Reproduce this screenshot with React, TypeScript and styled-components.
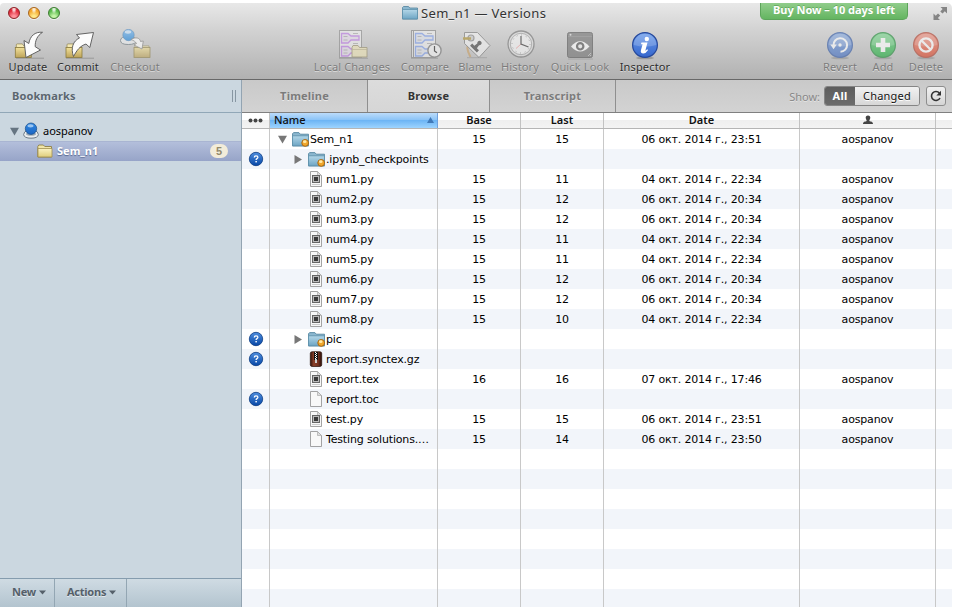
import React from 'react';
import styled, { createGlobalStyle, css } from 'styled-components';

const GlobalStyle = createGlobalStyle`
  * { box-sizing: border-box; }
  body { margin: 0; background: #fff; overflow: hidden; }
`;

const Window = styled.div`
  width: 954px;
  height: 608px;
  padding: 3px 2px 1px 0;
  display: flex;
  flex-direction: column;
  color: #111;
  background: #fff;
  font-family: 'Noto Sans', 'Open Sans', sans-serif;
  font-size: 11px;
  white-space: nowrap;
  cursor: default;
`;

const TitleArea = styled.header`
  flex: none;
  height: 77px;
  border-bottom: 1px solid #686868;
  border-radius: 4px 5px 0 0;
  background: linear-gradient(#e8e8e8, #d2d2d2 36%, #b1b1b1);
`;

const TitleBar = styled.div`
  height: 25px;
  display: grid;
  grid-template-columns: 402px 1fr 148px 44px;
  align-items: start;
`;

const Lights = styled.div`
  display: flex;
  gap: 8px;
  padding: 4px 0 0 8px;
`;

const Light = styled.i<{ $edge: string; $core: string; $glow: string }>`
  width: 12px;
  height: 12px;
  border-radius: 50%;
  border: 1px solid ${p => p.$edge};
  background:
    radial-gradient(ellipse at 50% 8%, #fffc 0 14%, #fff0 38%),
    radial-gradient(circle at 50% 90%, ${p => p.$glow} 0 15%, ${p => p.$core} 65%);
  box-shadow: 0 1px 0 #ffffff90;
`;

const Title = styled.div`
  display: flex;
  align-items: center;
  height: 20px;
  gap: 3px;
  font-size: 13px;
  letter-spacing: 0.33px;
  color: #333;
  text-shadow: 0 1px 0 #ffffffa0;
`;

const BuyNow = styled.div`
  height: 17px;
  border: 1px solid #5ca45a;
  border-top: 0;
  border-radius: 0 0 5px 5px;
  background: linear-gradient(#91cd8b, #64b561);
  color: #fff;
  font-size: 11px;
  font-weight: 700;
  line-height: 14px;
  text-align: center;
  letter-spacing: -0.02px;
  text-shadow: 0 -1px 0 #4b944988;
`;

const Corner = styled.div`
  padding: 3px 0 0 25px;
  height: 22px;
`;

const Tools = styled.div`
  display: flex;
  height: 51px;
`;

const ToolGroup = styled.div<{ $before?: number }>`
  display: flex;
  margin-left: ${p => p.$before ?? 0}px;
`;

const Tool = styled.div<{ $w: number; $off?: boolean }>`
  width: ${p => p.$w}px;
  display: flex;
  flex-direction: column;
  align-items: center;
  color: ${p => (p.$off ? '#7c7c7c' : '#2d2d2d')};
  letter-spacing: 0.15px;
  text-shadow: 0 1px 0 #ffffff80;
  svg { flex: none; width: 36px; height: 32px; opacity: ${p => (p.$off ? 0.62 : 1)}; }
  span { line-height: 14px; }
`;

const Body = styled.div`
  flex: 1;
  min-height: 0;
  display: flex;
`;

const Sidebar = styled.aside`
  flex: none;
  width: 242px;
  border-right: 1px solid #93a4b2;
  background: #cbd7e0;
  display: flex;
  flex-direction: column;
`;

const SidebarHeader = styled.div`
  height: 33px;
  border-bottom: 1px solid #91a7b7;
  display: flex;
  align-items: center;
  justify-content: space-between;
  padding: 0 5px 1px 12px;
  color: #5b6670;
  font-weight: 700;
  letter-spacing: 0.12px;
  text-shadow: 0 1px 0 #ffffff80;
`;

const Grip = styled.i`
  width: 4px;
  height: 12px;
  border: solid #8796a2;
  border-width: 0 1px;
`;

const Tree = styled.div`
  flex: 1;
  padding-top: 8px;
`;

const TreeRow = styled.div<{ $selected?: boolean }>`
  height: 20px;
  display: flex;
  align-items: center;
  padding: 0 13px 0 ${p => (p.$selected ? 37 : 10)}px;
  gap: 4px;
  color: ${p => (p.$selected ? '#fff' : '#000')};
  font-weight: ${p => (p.$selected ? 700 : 400)};
  span { line-height: 14px; margin-top: -1px; }
  ${p => p.$selected && css`
    background: linear-gradient(#b5c0dc, #97a4c8);
    text-shadow: 0 1px 1px #5b6a92;
    box-shadow: inset 0 1px 0 #a9b5d2;
  `}
`;

const Count = styled.b`
  margin-left: auto;
  width: 18px;
  height: 14px;
  border-radius: 7px;
  background: #f2ecd9;
  color: #92896c;
  text-align: center;
  line-height: 14px;
  text-shadow: none;
  font-family: 'Liberation Sans', sans-serif;
`;

const SidebarFooter = styled.div`
  height: 29px;
  border-top: 1px solid #859cae;
  background: linear-gradient(#cfdbe3, #b3c4cf);
  display: flex;
`;

const FooterButton = styled.div<{ $w: number }>`
  width: ${p => p.$w}px;
  border-right: 1px solid #93a6b3;
  padding: 0 0 3px 12px;
  display: flex;
  align-items: center;
  gap: 3px;
  font-weight: 700;
  color: #55606a;
  letter-spacing: -0.25px;
  text-shadow: 0 1px 0 #ffffff90;
  svg { margin-top: 2px; }
`;

const Main = styled.main`
  flex: 1;
  min-width: 0;
  display: flex;
  flex-direction: column;
`;

const TabBar = styled.nav`
  flex: none;
  height: 33px;
  display: flex;
  border-bottom: 1px solid #808080;
  background: linear-gradient(#c9c9c9, #d3d3d3);
`;

const Tab = styled.div<{ $w: number; $active?: boolean }>`
  width: ${p => p.$w}px;
  border-right: 1px solid #8f8f8f;
  padding-bottom: 1px;
  display: flex;
  align-items: center;
  justify-content: center;
  font-weight: 700;
  letter-spacing: 0.2px;
  color: ${p => (p.$active ? '#333' : '#7b7b7b')};
  background: ${p => (p.$active ? 'linear-gradient(#dcdcdc, #d6d6d6)' : 'none')};
  text-shadow: 0 1px 0 #ffffff90;
`;

const Filter = styled.div`
  margin-left: auto;
  padding-right: 6px;
  display: flex;
  align-items: center;
  color: #888;
  text-shadow: 0 1px 0 #ffffff70;
`;

const Segments = styled.div`
  height: 20px;
  margin: 0 6px 0 4px;
  display: flex;
  border: 1px solid #858585;
  border-radius: 3px;
  overflow: hidden;
`;

const Segment = styled.span<{ $w: number; $on?: boolean }>`
  width: ${p => p.$w}px;
  line-height: 17px;
  text-align: center;
  letter-spacing: 0.2px;
  font-weight: ${p => (p.$on ? 700 : 400)};
  color: ${p => (p.$on ? '#fff' : '#111')};
  background: ${p => (p.$on ? 'linear-gradient(#5d5d5d, #6b6b6b)' : 'linear-gradient(#f1f1f1, #d7d7d7)')};
  text-shadow: ${p => (p.$on ? 'none' : '0 1px 0 #fff')};
`;

const Refresh = styled.div`
  width: 20px;
  height: 20px;
  border: 1px solid #8d8d8d;
  border-radius: 3px;
  background: linear-gradient(#f1f1f1, #d5d5d5);
`;

const columns = '28px 168px 83px 83px 196px 136px 17px';

const TableHead = styled.div`
  flex: none;
  height: 16px;
  display: grid;
  grid-template-columns: ${columns};
  border-bottom: 1px solid #b5b5b5;
  background: linear-gradient(#fff 0 45%, #efefef 50%, #f3f3f3);
`;

const HeadCell = styled.div<{ $sorted?: boolean }>`
  display: flex;
  align-items: center;
  justify-content: ${p => (p.$sorted ? 'space-between' : 'center')};
  font-weight: ${p => (p.$sorted ? 500 : 600)};
  line-height: 12px;
  padding: ${p => (p.$sorted ? '0 3px 1px 4px' : '0 0 1px')};
  border-right: 1px solid ${p => (p.$sorted ? '#6fa0dd' : '#c2c2c2')};
  background: ${p => (p.$sorted ? 'linear-gradient(#bcdcfa, #8cc4f7 45%, #6db5f5 50%, #9dd4ff)' : 'none')};
  &:last-child { border: 0; }
`;

const Rows = styled.div`
  flex: 1;
  min-height: 0;
  overflow: hidden;
`;

const Row = styled.div<{ $alt: boolean }>`
  height: 20px;
  display: grid;
  grid-template-columns: ${columns};
  background: ${p => (p.$alt ? '#f2f5fa' : '#fff')};
  font-family: 'DejaVu Sans', sans-serif;
  letter-spacing: -0.16px;
  color: #000;
`;

const Cell = styled.div`
  display: flex;
  align-items: center;
  justify-content: center;
  border-right: 1px solid #c8c8c8;
  &:last-child { border: 0; }
`;

const StatusCell = styled(Cell)`
  padding-left: 1px;
`;

const NameCell = styled(Cell)<{ $depth: number }>`
  justify-content: flex-start;
  padding-left: ${p => 8 + p.$depth * 16}px;
`;

const Twist = styled.i`
  width: 14px;
  height: 20px;
  display: flex;
  align-items: center;
`;

const FileSlot = styled.i`
  width: 18px;
  height: 18px;
  display: flex;
  align-items: center;
`;

const Grad = ({ id, a, b }: { id: string; a: string; b: string }) => (
  <linearGradient id={id} x1="0" y1="0" x2="0" y2="1">
    <stop offset="0" stopColor={a} />
    <stop offset="1" stopColor={b} />
  </linearGradient>
);

const Box = ({ x, y }: { x: number; y: number }) => (
  <g>
    <path d={`M${x + 1} ${y}v-2.5q0-1 1-1h5l1.5 2h6.5v2.500z`} fill="#f4e9b4" stroke="#8e8352" strokeWidth=".7" />
    <rect x={x} y={y} width="16" height="10" fill="url(#gold)" stroke="#8a7a3c" strokeWidth=".8" />
  </g>
);

const UpdateIcon = () => (
  <svg viewBox="10 28 36 32">
    <defs><Grad id="gold" a="#f2e19a" b="#bea45a" /></defs>
    <path d="M16 58.2h28" stroke="#0003" />
    <Box x={15.3} y={47.4} />
    <path d="M42.500 32.300C35 31.500 30 36 28.800 43.500L24 40.500l2 17L40.500 50l-5.300-3.300c-.2-6 2-11 7.300-14.400z" fill="#fcfcfc" stroke="#555" strokeWidth=".9" strokeLinejoin="round" />
  </svg>
);

const CommitIcon = () => (
  <svg viewBox="60 28 36 32">
    <path d="M66 58.2h28" stroke="#0003" />
    <Box x={66} y={47.4} />
    <path d="M73.500 56.500C70.500 48 73 41 79.500 38l-3-3.500 17-2-3.700 15-3.800-3.500c-6 2-9 6-12.500 12.500z" fill="#fcfcfc" stroke="#555" strokeWidth=".9" strokeLinejoin="round" />
  </svg>
);

const CheckoutIcon = () => (
  <svg viewBox="117 28 36 32">
    <defs><Grad id="ball" a="#6fb4f2" b="#1f86dc" /></defs>
    <path d="M120.500 40.500q0-4 7.800-4t7.800 4q0 4-7.800 4t-7.800-4z" fill="#eceff1" stroke="#6c7981" />
    <circle cx="128.500" cy="35" r="5.700" fill="url(#ball)" stroke="#2f74b4" strokeWidth=".6" />
    <ellipse cx="128" cy="32" rx="3.200" ry="1.700" fill="#e5f3ff" opacity=".8" />
    <Box x={134} y={47.4} />
    <path d="M131 39.500c5-3 9-1.500 9.500 2l2.800-.5-1.300 8-8-4 2.500-1.500c-1-2-3-3-5.500-4z" fill="#fff" stroke="#777" strokeWidth=".8" />
  </svg>
);

const Blocks = ({ color }: { color: string }) => (
  <g fill="none" stroke={color} strokeWidth="1.3">
    <path d="M341.500 33.500h6.500l3 2.500h8v4h-8l-3 3h-6.500z" fill={color + '22'} />
    <path d="M341.500 46.500h6.500l3 2.500h8v4h-8l-3 3h-6.500z" fill={color + '22'} />
    <path d="M343.500 36.500h4M343.500 40h4M343.500 50h4M343.500 53h4M353 33.500h5M353 43.500h5" stroke="#999" strokeWidth=".8" />
  </g>
);

const LocalIcon = () => (
  <svg viewBox="334 28 36 32">
    <path d="M339 58.2h29" stroke="#0004" />
    <rect x="339.500" y="30.500" width="22" height="27" fill="#ededed" stroke="#8c8c8c" />
    <Blocks color="#bd7be6" />
    <path d="M352 57v-9.500l1-2h5l1.500 2h7.500V57z" fill="#eee5b7" stroke="#938a64" strokeWidth=".9" />
    <path d="M352 49.500h15" stroke="#b1a87c" strokeWidth=".7" />
  </svg>
);

const CompareIcon = () => (
  <svg viewBox="407 28 36 32">
    <path d="M411 58.2h27" stroke="#0004" />
    <rect x="411.500" y="30.500" width="3" height="27" fill="#e2e2e2" stroke="#858585" />
    <rect x="413.500" y="30.500" width="22" height="27" fill="#ededed" stroke="#858585" />
    <g transform="translate(74 0)"><Blocks color="#7d9dec" /></g>
    <circle cx="434.500" cy="50.500" r="6.600" fill="#f4f4f4" stroke="#777" strokeWidth="1.4" />
    <path d="M434.500 46v5l2.500 1.700" fill="none" stroke="#222" strokeWidth="1.2" />
  </svg>
);

const BlameIcon = () => (
  <svg viewBox="457 28 36 32">
    <path d="M467 57.7h20" stroke="#0003" />
    <path d="M470 40c-4 5-3 11 .5 17" fill="none" stroke="#c99f65" strokeWidth="2" />
    <path d="M464.500 32.500h13l12.500 13-11 12-14.500-14z" fill="#f2f2f2" stroke="#7c7c7c" strokeLinejoin="round" />
    <circle cx="471" cy="38" r="3" fill="#ccc" stroke="#888" strokeWidth="1.2" />
    <path d="M463 38.500h8" stroke="#ad9130" strokeWidth="2.5" />
    <g transform="translate(477 45.500) rotate(45)" fill="#444"><circle cy="-3.500" r="2.2" /><path d="M-1.200-2h2.400l.6 4h3v3h-9.600V2h3z" /></g>
  </svg>
);

const HistoryIcon = () => (
  <svg viewBox="502 28 36 32">
    <circle cx="521" cy="44" r="13" fill="#e2e2e2" stroke="#777" strokeWidth="1.3" />
    <circle cx="521" cy="44" r="10.7" fill="#f6f6f6" stroke="#969696" strokeWidth=".9" />
    <circle cx="521" cy="44" r="9" fill="none" stroke="#777" strokeDasharray=".8 3.912" />
    <path d="m521 44-5 4.500" stroke="#f28c8c" strokeWidth=".8" />
    <path d="M521 36v8l7.500 3" fill="none" stroke="#333" strokeWidth="1.2" />
  </svg>
);

const LookIcon = () => (
  <svg viewBox="562 28 36 32">
    <path d="M568 59h25" stroke="#0003" />
    <rect x="567.500" y="32.500" width="25" height="25" rx="2" fill="#757575" stroke="#555" />
    <path d="M568 36.500h24" stroke="#8f8f8f" strokeWidth=".7" />
    <circle cx="570.500" cy="34.700" r="1" fill="#ddd" />
    <path d="M571 46.500q9-10.500 18.500 0-9.500 10-18.500 0z" fill="#fff" />
    <circle cx="580.200" cy="46.300" r="3.2" fill="#f3f3f3" stroke="#555" strokeWidth="2.2" />
    <path d="m588 56 3-3m-1 3 1-1" stroke="#ddd" strokeWidth=".7" />
  </svg>
);

type RoundProps = { x: number; id: string; a: string; b: string; edge: string; children: React.ReactNode };
const RoundIcon = ({ x, id, a, b, edge, children }: RoundProps) => (
  <svg viewBox={`${x - 18} 28 36 32`}>
    <defs><Grad id={id} a={a} b={b} /></defs>
    <ellipse cx={x} cy="58" rx="9" ry="1.3" fill="#0003" />
    <circle cx={x} cy="45" r="12.4" fill={`url(#${id})`} stroke={edge} strokeWidth="1.2" />
    <path d={`M${x - 11.3} 45a11.3 11.3 0 0 1 22.6 0q-11 3-22.6 0z`} fill="#fff" opacity=".2" />
    <g transform={`translate(${x} 45)`}>{children}</g>
  </svg>
);

const InfoIcon = () => (
  <RoundIcon x={645} id="info" a="#6a9bea" b="#3566cd" edge="#26489a">
    <circle cx="1.8" cy="-6" r="2.2" fill="#fff" />
    <path d="M-3.500-2.500H2.500L.3 5.700q.8 0 1.800-1.400l1 .6Q.8 8.500-1.700 8.500c-2.200 0-2.900-1.500-2.300-3.500l1.600-5.800h-1.700z" fill="#fff" />
  </RoundIcon>
);

const RevertIcon = () => (
  <RoundIcon x={840} id="revert" a="#709adc" b="#4470c4" edge="#3259a5">
    <path d="M-6.500.5A6.800 6.800 0 1 1 .5 6.800" fill="none" stroke="#fff" strokeWidth="2" />
    <path d="M-9.700-.5h6.500l-3.300 4.800z" fill="#fff" />
    <circle r="1.7" fill="#fff" />
  </RoundIcon>
);

const AddIcon = () => (
  <RoundIcon x={883} id="add" a="#61d178" b="#22ae3f" edge="#218b39">
    <path d="M-2.300-7h4.600v4.700H7v4.600H2.300V7h-4.600V2.300H-7v-4.600h4.700z" fill="#fff" />
  </RoundIcon>
);

const DeleteIcon = () => (
  <RoundIcon x={926} id="delete" a="#ee7a66" b="#df4729" edge="#b1402e">
    <circle r="6.6" fill="none" stroke="#fff" strokeWidth="2.3" />
    <path d="m-4.500-4.500 9 9" stroke="#fff" strokeWidth="2.3" />
  </RoundIcon>
);

const FolderIcon = ({ badge, w = 16 }: { badge?: boolean; w?: number }) => (
  <svg width={w} height={w} viewBox="0 0 16 16">
    <defs><Grad id="folder" a="#b4d7e8" b="#6da5c4" /></defs>
    <path d="M.5 14V2.500l1-1h5l1.300 1.500h7.700V14z" fill="#8bb7cf" stroke="#50839d" strokeWidth=".8" />
    <path d="M.5 4.500h15V14H.5z" fill="url(#folder)" stroke="#5e91ab" strokeWidth=".8" />
    {badge && <><circle cx="12.4" cy="11.200" r="3.2" fill="#f0a72c" stroke="#a66613" strokeWidth=".9" /><ellipse cx="12" cy="10" rx="1.7" ry="1.2" fill="#ffe9a6" /></>}
  </svg>
);

const YellowFolder = () => (
  <svg width="16" height="16" viewBox="0 0 16 16">
    <defs><Grad id="yellow" a="#fbf3c4" b="#dfcd7b" /></defs>
    <path d="M.8 14V3.500l1-1.500h4.500l1.500 1.500h6.700V14z" fill="#f1e5a8" stroke="#8d7f46" strokeWidth=".9" />
    <path d="M1 14V5.500h14V14z" fill="url(#yellow)" stroke="#a29150" strokeWidth=".8" />
  </svg>
);

const ServerIcon = () => (
  <svg width="16" height="18" viewBox="0 0 16 18">
    <defs><Grad id="server" a="#2f86e0" b="#1b66c4" /></defs>
    <path d="M.6 12.700Q1 9.500 4 8.500h8q3 1 3.400 4.200-.6 3.500-7.400 3.500T.6 12.700z" fill="#e9ecee" stroke="#6d7b88" />
    <ellipse cx="8" cy="12" rx="5" ry="1.800" fill="#9aa9b5" />
    <circle cx="8" cy="6.700" r="5.700" fill="url(#server)" stroke="#164c8a" strokeWidth=".7" />
    <ellipse cx="7.500" cy="3.800" rx="3" ry="1.600" fill="#d5ebff" opacity=".65" />
  </svg>
);

const PageIcon = ({ script }: { script?: boolean }) => (
  <svg width="16" height="16" viewBox="0 0 16 16">
    <path d="M2.500.5h7l4 4v11h-11z" fill="#f8f8f8" stroke="#999" strokeWidth=".9" />
    <path d="M9.500.5v4h4z" fill="#ddd" stroke="#aaa" strokeWidth=".7" />
    {script && <><rect x="4.500" y="4.500" width="7" height="7" fill="#bbb" stroke="#666" /><rect x="6" y="6" width="4" height="4" fill="#383838" /><path d="M4 13.500h8" stroke="#ccc" /></>}
  </svg>
);

const ZipIcon = () => (
  <svg width="16" height="16" viewBox="0 0 16 16">
    <defs><linearGradient id="zip"><stop stopColor="#33130a" /><stop offset=".3" stopColor="#8b402a" /><stop offset=".7" stopColor="#733120" /><stop offset="1" stopColor="#250d07" /></linearGradient></defs>
    <rect x="2.3" y=".7" width="11.4" height="14.8" rx="1.8" fill="url(#zip)" stroke="#2a0e07" strokeWidth=".7" />
    <path d="M8 1v8" stroke="#111" strokeWidth="4" />
    <path d="M7.500 1v8" stroke="#fff" strokeDasharray="1 1" />
    <path d="M8.500 2v7" stroke="#fff" strokeDasharray="1 1" />
    <rect x="7" y="8" width="2" height="4" fill="#ccc" />
  </svg>
);

const Question = () => (
  <svg width="16" height="16" viewBox="0 0 15 16">
    <defs><Grad id="question" a="#4e8ede" b="#0646a6" /></defs>
    <circle cx="7.5" cy="8" r="6.7" fill="url(#question)" stroke="#0c3c83" strokeWidth=".8" />
    <path d="M5.800 6.500q0-1.600 1.800-1.600t1.800 1.400q0 .8-.9 1.300-.9.500-.9 1.400" fill="none" stroke="#fff" strokeWidth="1.3" />
    <rect x="6.900" y="10" width="1.5" height="1.4" fill="#fff" />
  </svg>
);

const Arrow = ({ down, color = '#777' }: { down?: boolean; color?: string }) => (
  <svg width="9" height="9" viewBox="0 0 9 9"><path d={down ? 'M0 .8h9L4.500 8.500z' : 'M.5 0v9L8 4.500z'} fill={color} /></svg>
);

const SmallArrow = () => <svg width="7" height="5" viewBox="0 0 7 5"><path d="M0 .5h7L3.500 4.500z" fill="#55606a" /></svg>;

const tools = {
  left: [
    { w: 56, text: 'Update', icon: <UpdateIcon /> },
    { w: 44, text: 'Commit', icon: <CommitIcon /> },
    { w: 70, text: 'Checkout', icon: <CheckoutIcon />, off: true },
  ],
  middle: [
    { w: 84, text: 'Local Changes', icon: <LocalIcon />, off: true },
    { w: 62, text: 'Compare', icon: <CompareIcon />, off: true },
    { w: 38, text: 'Blame', icon: <BlameIcon />, off: true },
    { w: 52, text: 'History', icon: <HistoryIcon />, off: true },
    { w: 68, text: 'Quick Look', icon: <LookIcon />, off: true },
    { w: 62, text: 'Inspector', icon: <InfoIcon /> },
  ],
  right: [
    { w: 44, text: 'Revert', icon: <RevertIcon />, off: true },
    { w: 42, text: 'Add', icon: <AddIcon />, off: true },
    { w: 44, text: 'Delete', icon: <DeleteIcon />, off: true },
  ],
};

type ToolData = { w: number; text: string; icon: React.ReactNode; off?: boolean };
const renderTools = (items: ToolData[]) =>
  items.map(t => (
    <Tool key={t.text} $w={t.w} $off={t.off}>
      {t.icon}
      <span>{t.text}</span>
    </Tool>
  ));

type Entry = { name: string; kind: 'folder' | 'script' | 'page' | 'zip'; depth: number; open?: boolean; q?: boolean; base?: number; last?: number; date?: string };
const oct4 = '04 окт. 2014 г., 22:34';
const oct6 = '06 окт. 2014 г., 20:34';
const entries: Entry[] = [
  { name: 'Sem_n1', kind: 'folder', depth: 0, open: true, base: 15, last: 15, date: '06 окт. 2014 г., 23:51' },
  { name: '.ipynb_checkpoints', kind: 'folder', depth: 1, q: true },
  { name: 'num1.py', kind: 'script', depth: 1, base: 15, last: 11, date: oct4 },
  { name: 'num2.py', kind: 'script', depth: 1, base: 15, last: 12, date: oct6 },
  { name: 'num3.py', kind: 'script', depth: 1, base: 15, last: 12, date: oct6 },
  { name: 'num4.py', kind: 'script', depth: 1, base: 15, last: 11, date: oct4 },
  { name: 'num5.py', kind: 'script', depth: 1, base: 15, last: 11, date: oct4 },
  { name: 'num6.py', kind: 'script', depth: 1, base: 15, last: 12, date: oct6 },
  { name: 'num7.py', kind: 'script', depth: 1, base: 15, last: 12, date: oct6 },
  { name: 'num8.py', kind: 'script', depth: 1, base: 15, last: 10, date: oct4 },
  { name: 'pic', kind: 'folder', depth: 1, q: true },
  { name: 'report.synctex.gz', kind: 'zip', depth: 1, q: true },
  { name: 'report.tex', kind: 'script', depth: 1, base: 16, last: 16, date: '07 окт. 2014 г., 17:46' },
  { name: 'report.toc', kind: 'page', depth: 1, q: true },
  { name: 'test.py', kind: 'script', depth: 1, base: 15, last: 15, date: '06 окт. 2014 г., 23:51' },
  { name: 'Testing solutions.…', kind: 'page', depth: 1, base: 15, last: 14, date: '06 окт. 2014 г., 23:50' },
];

const FileIcon = ({ kind }: { kind: Entry['kind'] }) => {
  if (kind === 'folder') return <FolderIcon badge w={17} />;
  if (kind === 'zip') return <ZipIcon />;
  return <PageIcon script={kind === 'script'} />;
};

export default function App() {
  const rows: (Entry | null)[] = Array.from({ length: 24 }, (_, i) => entries[i] ?? null);
  return (
    <Window>
      <GlobalStyle />
      <TitleArea>
        <TitleBar>
          <Lights>
            <Light $edge="#8e2226" $core="#df2939" $glow="#ff929b" />
            <Light $edge="#a8641c" $core="#f3a62c" $glow="#ffe889" />
            <Light $edge="#3d7b30" $core="#59b94b" $glow="#c4f4a8" />
          </Lights>
          <Title><FolderIcon /><span>Sem_n1 — Versions</span></Title>
          <BuyNow>Buy Now – 10 days left</BuyNow>
          <Corner>
            <svg width="15" height="15" viewBox="0 0 15 15" fill="#858585">
              <path d="M7.500 1H14v6.500L11.800 5.300 9.500 7.600 7.300 5.400 9.600 3.100zM7 14H.5V7.500l2.200 2.200L5 7.400l2.200 2.200-2.300 2.300z" />
            </svg>
          </Corner>
        </TitleBar>
        <Tools>
          <ToolGroup>{renderTools(tools.left)}</ToolGroup>
          <ToolGroup $before={140}>{renderTools(tools.middle)}</ToolGroup>
          <ToolGroup $before={142}>{renderTools(tools.right)}</ToolGroup>
        </Tools>
      </TitleArea>
      <Body>
        <Sidebar>
          <SidebarHeader>Bookmarks<Grip /></SidebarHeader>
          <Tree>
            <TreeRow><Arrow down color="#667582" /><ServerIcon /><span>aospanov</span></TreeRow>
            <TreeRow $selected><YellowFolder /><span>Sem_n1</span><Count>5</Count></TreeRow>
          </Tree>
          <SidebarFooter>
            <FooterButton $w={55}>New<SmallArrow /></FooterButton>
            <FooterButton $w={72}>Actions<SmallArrow /></FooterButton>
          </SidebarFooter>
        </Sidebar>
        <Main>
          <TabBar>
            <Tab $w={126}>Timeline</Tab>
            <Tab $w={122} $active>Browse</Tab>
            <Tab $w={126}>Transcript</Tab>
            <Filter>
              Show:
              <Segments><Segment $w={30} $on>All</Segment><Segment $w={64}>Changed</Segment></Segments>
              <Refresh>
                <svg width="18" height="18" viewBox="0 0 18 18">
                  <path d="M13 11A4.500 4.500 0 1 1 12.400 6" fill="none" stroke="#333" strokeWidth="1.6" />
                  <path d="M14 3.800v4.700H9.300z" fill="#333" />
                </svg>
              </Refresh>
            </Filter>
          </TabBar>
          <TableHead>
            <HeadCell><svg width="15" height="5" viewBox="0 0 15 5" fill="#444"><circle cx="2.5" cy="2.5" r="2" /><circle cx="7.5" cy="2.5" r="2" /><circle cx="12.5" cy="2.5" r="2" /></svg></HeadCell>
            <HeadCell $sorted>Name<svg width="7" height="6" viewBox="0 0 7 6"><path d="M3.500 0 7 6H0z" fill="#4079b8" /></svg></HeadCell>
            <HeadCell>Base</HeadCell>
            <HeadCell>Last</HeadCell>
            <HeadCell>Date</HeadCell>
            <HeadCell><svg width="10" height="10" viewBox="0 0 10 10" fill="#444"><path d="M5 .5c1.700 0 2.400 1 2.300 2.300C7.200 4.200 6.300 5 6.300 6c1.500.6 3.700.6 3.700 3H0c0-2.400 2.200-2.400 3.700-3 0-1-.9-1.800-1-3.200C2.600 1.500 3.300.5 5 .5z" /></svg></HeadCell>
            <HeadCell />
          </TableHead>
          <Rows>
            {rows.map((r, i) => (
              <Row key={i} $alt={i % 2 === 1}>
                <StatusCell>{r?.q && <Question />}</StatusCell>
                <NameCell $depth={r?.depth ?? 0}>
                  {r && (
                    <>
                      <Twist>{r.kind === 'folder' && <Arrow down={r.open} />}</Twist>
                      <FileSlot><FileIcon kind={r.kind} /></FileSlot>
                      {r.name}
                    </>
                  )}
                </NameCell>
                <Cell>{r?.base}</Cell>
                <Cell>{r?.last}</Cell>
                <Cell>{r?.date}</Cell>
                <Cell>{r?.base && 'aospanov'}</Cell>
                <Cell />
              </Row>
            ))}
          </Rows>
        </Main>
      </Body>
    </Window>
  );
}
